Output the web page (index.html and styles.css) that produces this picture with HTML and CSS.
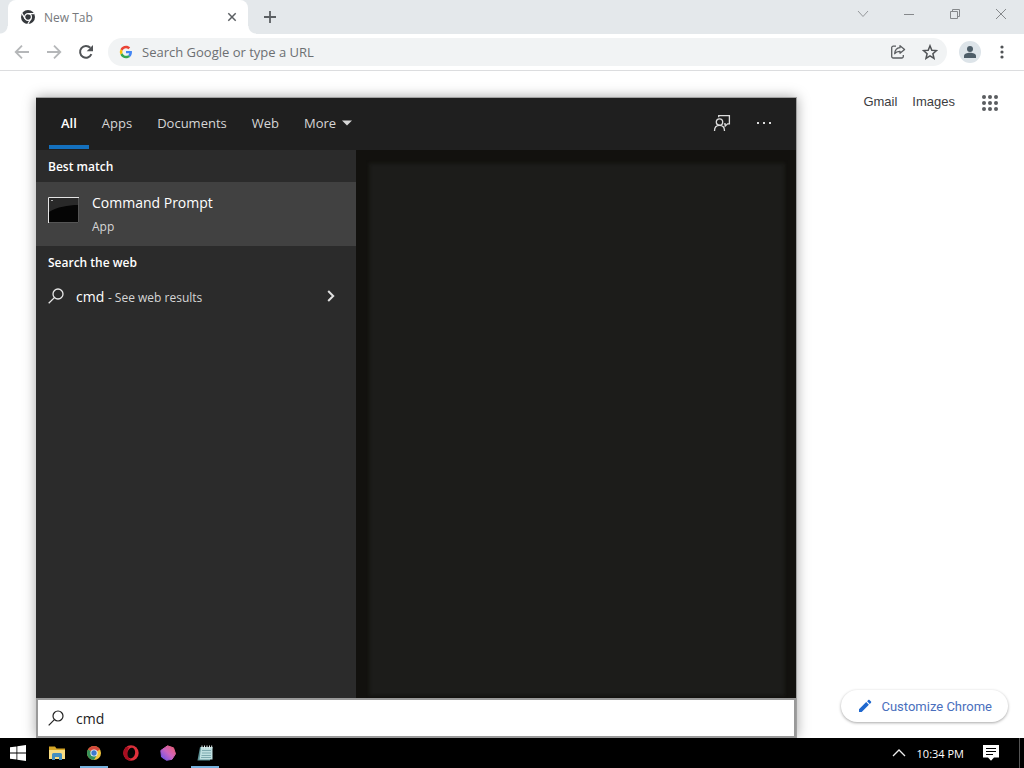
FILE: index.html
```html
<!DOCTYPE html>
<html lang="en">
<head>
    <meta charset="UTF-8">
    <meta name="viewport" content="width=device-width, initial-scale=1.0">
    <title>New Tab</title>
    <link rel="stylesheet" href="styles.css">
</head>
<body>
    <!-- Browser window -->
    <main class="browser">
        <div class="tab-strip">
            <div class="tab">
                <svg class="tab-icon" width="16" height="16" viewBox="0 0 16 16">
                    <circle cx="8" cy="8" r="7" fill="#35383c"/>
                    <circle cx="8" cy="8" r="3.4" fill="none" stroke="#fff" stroke-width="1.2"/>
                    <path d="M8 4.6h6.2M5.1 9.7L2 4.4M10.9 9.7L7.8 15" stroke="#fff" stroke-width="1.2"/>
                </svg>
                <span class="tab-title">New Tab</span>
                <button class="icon-button tab-close" aria-label="Close tab">
                    <svg width="10" height="10" viewBox="0 0 10 10"><path d="M1.300 1.300l7.400 7.400M8.700 1.300L1.300 8.700" stroke="#5b5f63" stroke-width="1.500"/></svg>
                </button>
            </div>
            <button class="icon-button new-tab" aria-label="New tab">
                <svg width="14" height="14" viewBox="0 0 14 14"><path d="M7 1v12M1 7h12" stroke="#5b5f63" stroke-width="1.800"/></svg>
            </button>
            <div class="window-controls">
                <button class="icon-button" aria-label="Search tabs">
                    <svg width="12" height="12" viewBox="0 0 12 12"><path d="M1 3l5 5.500L11 3" fill="none" stroke="#95989b"/></svg>
                </button>
                <button class="icon-button" aria-label="Minimize">
                    <svg width="12" height="12" viewBox="0 0 12 12"><path d="M1 6.500h10" stroke="#85888b"/></svg>
                </button>
                <button class="icon-button" aria-label="Restore">
                    <svg width="12" height="12" viewBox="0 0 12 12"><path d="M1.500 3.500h7v7h-7zM3.500 3.500v-2h7v7h-2" fill="none" stroke="#85888b"/></svg>
                </button>
                <button class="icon-button" aria-label="Close">
                    <svg width="12" height="12" viewBox="0 0 12 12"><path d="M1 1l10 10M11 1L1 11" stroke="#85888b"/></svg>
                </button>
            </div>
        </div>

        <div class="toolbar">
            <button class="icon-button nav-button" aria-label="Back">
                <svg width="16" height="16" viewBox="0 0 16 16"><path d="M15 8H2M8 1.700L1.700 8 8 14.300" fill="none" stroke="#b5b7b9" stroke-width="1.800"/></svg>
            </button>
            <button class="icon-button nav-button" aria-label="Forward">
                <svg width="16" height="16" viewBox="0 0 16 16"><path d="M1 8h13M8 1.700L14.300 8 8 14.300" fill="none" stroke="#b5b7b9" stroke-width="1.800"/></svg>
            </button>
            <button class="icon-button nav-button" aria-label="Reload">
                <svg width="16" height="16" viewBox="0 0 16 16"><path d="M13.400 10.200A5.900 5.900 0 1 1 12.300 3.800" fill="none" stroke="#505356" stroke-width="2"/><path d="M15 1v6.300H8.700z" fill="#505356"/></svg>
            </button>
            <div class="omnibox">
                <svg width="14" height="14" viewBox="-3 -3 54 54">
                    <path fill="#ea4335" d="M24 9.500c3.540 0 6.710 1.220 9.210 3.600l6.850-6.850C35.900 2.380 30.470 0 24 0 14.620 0 6.510 5.380 2.560 13.220l7.980 6.190C12.430 13.720 17.740 9.500 24 9.500z"/>
                    <path fill="#4285f4" d="M46.980 24.550c0-1.570-.15-3.090-.38-4.550H24v9.020h12.940c-.58 2.960-2.260 5.480-4.780 7.180l7.730 6c4.510-4.180 7.090-10.360 7.090-17.650z"/>
                    <path fill="#fbbc05" d="M10.530 28.590a14.500 14.500 0 0 1 0-9.180l-7.980-6.190a24 24 0 0 0 0 21.560z"/>
                    <path fill="#34a853" d="M24 48c6.480 0 11.930-2.130 15.890-5.810l-7.730-6c-2.150 1.450-4.920 2.300-8.160 2.300-6.260 0-11.570-4.220-13.470-9.910l-7.980 6.190C6.510 42.620 14.620 48 24 48z"/>
                </svg>
                <input class="omnibox-input" type="text" aria-label="Address" placeholder="Search Google or type a URL">
                <button class="icon-button" aria-label="Share">
                    <svg width="16" height="16" viewBox="0 0 16 16" fill="none" stroke="#5a5d60" stroke-width="1.300"><path d="M6 2.200H3.200a1.500 1.500 0 0 0-1.500 1.500v8.800A1.500 1.500 0 0 0 3.200 14h8.600a1.500 1.500 0 0 0 1.500-1.500V11"/><path d="M10 1.700l4.600 3.700L10 9.200V7.300c-2.300-.1-4 .5-5.300 2.400.2-3.400 2-5.700 5.300-6z" stroke-linejoin="round"/></svg>
                </button>
                <button class="icon-button" aria-label="Bookmark this tab">
                    <svg width="16" height="16" viewBox="0 0 16 16"><path d="M8 1.800l1.800 4.400 4.700.4-3.600 3.100 1.100 4.600L8 11.800l-4 2.500 1.100-4.600-3.600-3.100 4.700-.4z" fill="none" stroke="#505356" stroke-width="1.500"/></svg>
                </button>
            </div>
            <button class="icon-button avatar" aria-label="Profile">
                <svg width="14" height="14" viewBox="0 0 14 14" fill="#4d5d68"><circle cx="7" cy="4" r="3"/><path d="M1 13v-2c0-2 3-3.200 6-3.200s6 1.200 6 3.200v2z"/></svg>
            </button>
            <button class="icon-button menu-button" aria-label="Menu">
                <svg width="4" height="14" viewBox="0 0 4 14" fill="#505356"><circle cx="2" cy="2" r="1.600"/><circle cx="2" cy="7" r="1.600"/><circle cx="2" cy="12" r="1.600"/></svg>
            </button>
        </div>

        <div class="page">
            <nav class="page-links">
                <a href="#">Gmail</a>
                <a href="#">Images</a>
                <button class="icon-button" aria-label="Google apps">
                    <svg width="18" height="18" viewBox="0 0 18 18" fill="#5a5d60">
                        <circle cx="3" cy="3" r="2"/><circle cx="9" cy="3" r="2"/><circle cx="15" cy="3" r="2"/>
                        <circle cx="3" cy="9" r="2"/><circle cx="9" cy="9" r="2"/><circle cx="15" cy="9" r="2"/>
                        <circle cx="3" cy="15" r="2"/><circle cx="9" cy="15" r="2"/><circle cx="15" cy="15" r="2"/>
                    </svg>
                </button>
            </nav>
            <button class="customize">
                <svg width="16" height="16" viewBox="0 0 16 16" fill="#1f68cf"><path d="M2 11.300V14h2.700l7.200-7.200-2.700-2.700zM10.100 3.200l2.700 2.700 1.200-1.200c.4-.4.4-.9 0-1.200l-1.500-1.500c-.4-.4-.9-.4-1.200 0z"/></svg>
                Customize Chrome
            </button>
        </div>
    </main>

    <!-- Windows search flyout -->
    <section class="search-panel">
        <header class="search-header">
            <nav class="filters">
                <button class="filter active">All</button>
                <button class="filter">Apps</button>
                <button class="filter">Documents</button>
                <button class="filter">Web</button>
                <button class="filter">More
                    <svg width="10" height="6" viewBox="0 0 10 6"><path d="M0 .5h10L5 5.500z" fill="#d6d6d6"/></svg>
                </button>
            </nav>
            <button class="icon-button header-button" aria-label="Feedback">
                <svg width="18" height="18" viewBox="0 0 18 18" fill="none" stroke="#dcdcdc" stroke-width="1.300"><circle cx="6.500" cy="8" r="3.200"/><path d="M1.500 17c0-3.600 2-5.600 5-5.600s5 2 5 5.600M5.700 3.200V1.600h10.700v8.200h-1.800l-2.400 2.300V9.800h-1.300"/></svg>
            </button>
            <button class="icon-button header-button" aria-label="Options">
                <svg width="16" height="4" viewBox="0 0 16 4" fill="#dcdcdc"><path d="M1 1h2v2H1zM7 1h2v2H7zM13 1h2v2h-2z"/></svg>
            </button>
        </header>
        <div class="search-body">
            <div class="results">
                <h2>Best match</h2>
                <button class="best-match">
                    <svg width="32" height="26" viewBox="0 0 32 26">
                        <path d="M0 0h31v26H0z" fill="#050505"/>
                        <path d="M1 1h29v7C20 8 9 10 1 15z" fill="#292929"/>
                        <path d="M.5 26V.5H31" fill="none" stroke="#e4e4e4"/>
                        <path d="M30.500 1v24.500H1" fill="none" stroke="#555"/>
                        <path d="M3 3.500h2" stroke="#aaa"/>
                    </svg>
                    <span class="match-text">
                        <span class="match-name">Command Prompt</span>
                        <span class="match-type">App</span>
                    </span>
                </button>
                <h2>Search the web</h2>
                <button class="web-result">
                    <svg width="16" height="16" viewBox="0 0 16 16" fill="none" stroke="#e8e8e8" stroke-width="1.300"><circle cx="10" cy="6" r="5"/><path d="M6.400 9.600L.7 15.300"/></svg>
                    <span class="query">cmd <small>- See web results</small></span>
                    <svg width="8" height="12" viewBox="0 0 8 12"><path d="M1.200 1l5 5-5 5" fill="none" stroke="#e0e0e0" stroke-width="2"/></svg>
                </button>
            </div>
            <div class="preview"></div>
        </div>
        <label class="search-box">
            <svg width="16" height="16" viewBox="0 0 16 16" fill="none" stroke="#222" stroke-width="1.200"><circle cx="10" cy="6" r="5"/><path d="M6.400 9.600L.7 15.300"/></svg>
            <input type="text" aria-label="Search" value="cmd">
        </label>
    </section>

    <footer class="taskbar">
        <button class="icon-button start" aria-label="Start">
            <svg width="16" height="16" viewBox="0 0 16 16" fill="#fff"><path d="M0 2.300l6.500-.9v6.200H0zM7.300 1.300L16 0v7.600H7.300zM0 8.400h6.500v6.200L0 13.700zM7.300 8.400H16V16l-8.700-1.300z"/></svg>
        </button>
        <button class="icon-button task" aria-label="File Explorer">
            <svg width="16" height="16" viewBox="0 0 16 16"><path d="M0 1.500h6l1.500 2H16V14H0z" fill="#d9a928"/><path d="M0 5h16v9H0z" fill="#f9dd83"/><path d="M3 15V9.500a1.500 1.500 0 0 1 1.500-1.500h7A1.500 1.500 0 0 1 13 9.500V15h-3v-3H6v3z" fill="#458fc0"/></svg>
        </button>
        <button class="icon-button task running" aria-label="Chrome">
            <svg width="16" height="16" viewBox="0 0 16 16"><circle cx="8" cy="8" r="7" fill="#f4c63d"/><path d="M8 8L1.940 4.500A7 7 0 0 1 14.060 4.500z" fill="#d84b3e"/><path d="M8 8L1.940 4.500A7 7 0 0 0 8 15l3-5.300z" fill="#35915a"/><circle cx="8" cy="8" r="3.600" fill="#f2f4f5"/><circle cx="8" cy="8" r="2.700" fill="#3f79cc"/></svg>
        </button>
        <button class="icon-button task" aria-label="Opera">
            <svg width="16" height="16" viewBox="0 0 16 16"><circle cx="8" cy="8" r="7.700" fill="#e0313c"/><path d="M3 2.200a7.700 7.700 0 0 0 6 13.400C4.500 14 3.500 6 6 2z" fill="#a70e20"/><ellipse cx="8.300" cy="8" rx="3.800" ry="5.400" fill="#050505" transform="rotate(12 8 8)"/></svg>
        </button>
        <button class="icon-button task" aria-label="Paint">
            <svg width="16" height="16" viewBox="0 0 16 16"><defs><linearGradient id="gem" x1="0" y1="1" x2="1" y2="0"><stop offset="0" stop-color="#5b50ef"/><stop offset=".5" stop-color="#cd64c0"/><stop offset="1" stop-color="#f0616d"/></linearGradient></defs><path d="M7.500.8l6 2 2 6-3.500 5.500-5.500 1L1.500 12 .8 5.500z" fill="url(#gem)" stroke="url(#gem)" stroke-linejoin="round"/></svg>
        </button>
        <button class="icon-button task running" aria-label="Notepad">
            <svg width="16" height="16" viewBox="0 0 16 16"><path d="M3 2h12.500L13 15.500H.5z" fill="#5b8f93"/><path d="M4 2h11.500v12.500H2.500z" fill="#bfe0e1"/><path d="M5 5.500h9M5 8h9M4.500 10.500H14M4 12.500h10" stroke="#7eabb0"/><path d="M5 .5v3M7.500.5v3M10 .5v3M12.500.5v3M14.700.5v3" stroke="#e8f3f3"/></svg>
        </button>
        <div class="tray">
            <button class="icon-button" aria-label="Show hidden icons">
                <svg width="14" height="8" viewBox="0 0 14 8"><path d="M1 7l6-6 6 6" fill="none" stroke="#eee" stroke-width="1.300"/></svg>
            </button>
            <time class="clock" datetime="22:34">10:34 PM</time>
            <button class="icon-button notifications" aria-label="Notifications">
                <svg width="16" height="16" viewBox="0 0 16 16"><path d="M0 0h16v12.500h-5L8 15.800l-3-3.300H0z" fill="#fff"/><path d="M3 3.500h10M3 6.500h10M3 9.500h7" stroke="#000"/></svg>
            </button>
        </div>
    </footer>
</body>
</html>
```
FILE: styles.css
```css
* {
    box-sizing: border-box;
}
body {
    display: flex;
    flex-direction: column;
    height: 100vh;
    margin: 0;
    overflow: hidden;
    background: #fff;
    font-family: "Open Sans", "Noto Sans", sans-serif;
    font-size: 13px;
}
button, input {
    font: inherit;
    color: inherit;
}
button {
    border: 0;
    padding: 0;
    background: none;
    cursor: pointer;
}
svg {
    flex: none;
    display: block;
}
.icon-button {
    display: flex;
    align-items: center;
    justify-content: center;
}

/* Browser */
.browser {
    flex: 1;
    min-height: 0;
    display: flex;
    flex-direction: column;
}
.tab-strip {
    display: flex;
    height: 34px;
    padding-left: 8px;
    background: #e4e8eb;
}
.tab {
    position: relative;
    display: flex;
    align-items: center;
    width: 240px;
    padding: 0 8px 0 12px;
    gap: 8px;
    background: #fff;
    border-radius: 8px 8px 0 0;
    color: #76797c;
    font-size: 12px;
}
/* Curved feet of the active tab */
.tab::before, .tab::after {
    content: "";
    position: absolute;
    bottom: 0;
    width: 8px;
    height: 8px;
}
.tab::before {
    right: 100%;
    background: radial-gradient(circle at 0 0, transparent 7px, #fff 8px);
}
.tab::after {
    left: 100%;
    background: radial-gradient(circle at 100% 0, transparent 7px, #fff 8px);
}
.tab-title {
    flex: 1;
}
.tab-close {
    width: 16px;
    height: 16px;
}
.new-tab {
    width: 44px;
}
.window-controls {
    display: flex;
    margin-left: auto;
    height: 28px;
}
.window-controls button {
    width: 46px;
}
.toolbar {
    display: flex;
    align-items: center;
    height: 37px;
    padding: 0 6px;
    border-bottom: 1px solid #dcdddf;
}
.nav-button {
    width: 32px;
    height: 28px;
}
.omnibox {
    flex: 1;
    display: flex;
    align-items: center;
    gap: 16px;
    height: 28px;
    margin: 0 6px;
    padding: 0 9px 0 11px;
    border-radius: 14px;
    background: #f1f3f4;
}
.omnibox-input {
    flex: 1;
    min-width: 0;
    margin-left: -7px;
    padding: 0;
    border: 0;
    outline: 0;
    background: none;
}
.omnibox-input::placeholder {
    color: #6c6f72;
    opacity: 1;
}
.avatar {
    width: 22px;
    height: 22px;
    margin-left: 6px;
    border-radius: 50%;
    background: #dde4e9;
}
.menu-button {
    width: 32px;
    height: 28px;
    margin-left: 5px;
}
.page {
    flex: 1;
    display: flex;
    flex-direction: column;
    align-items: flex-end;
    justify-content: space-between;
    padding: 23px 16px 16px;
}
.page-links {
    display: flex;
    align-items: center;
    gap: 15px;
    padding-right: 9px;
    font-family: "Liberation Sans", Arial, sans-serif;
    line-height: 16px;
}
.page-links a {
    padding-bottom: 2px;
    color: #3c3d3f;
    text-decoration: none;
}
.page-links button {
    margin-left: 11px;
}
.customize {
    display: flex;
    align-items: center;
    gap: 8px;
    height: 32px;
    padding: 0 16px;
    border-radius: 16px;
    background: #fff;
    box-shadow: 0 1px 3px rgba(0, 0, 0, .35);
    color: #4a6fbd;
    font-family: Roboto, sans-serif;
}

/* Search flyout */
.search-panel {
    position: absolute;
    top: 97px;
    bottom: 30px;
    left: 36px;
    width: 761px;
    max-width: calc(100vw - 36px);
    display: flex;
    flex-direction: column;
    border: 1px solid #a0a0a0;
    border-width: 1px 1px 0 0;
    background: #1f1f1f;
    box-shadow: 0 0 12px rgba(0, 0, 0, .35);
    color: #d6d6d6;
}
.search-header {
    display: flex;
    height: 52px;
    padding: 0 11px 0 13px;
}
.filters {
    flex: 1;
    display: flex;
    gap: 1px;
}
.filter {
    display: flex;
    align-items: center;
    gap: 6px;
    padding: 2px 12px 0;
    border-bottom: 4px solid transparent;
    margin-bottom: 1px;
}
.filter.active {
    border-color: #1470bd;
    color: #fff;
    font-weight: 600;
}
.header-button {
    width: 42px;
    padding-bottom: 2px;
}
.search-body {
    flex: 1;
    min-height: 0;
    display: flex;
}
.results {
    flex: none;
    width: 320px;
    background: #2b2b2b;
}
.results h2 {
    margin: 0;
    padding: 2px 12px 0;
    color: #fff;
    font-size: 12px;
    font-weight: 600;
    line-height: 30px;
}
.best-match {
    display: flex;
    align-items: center;
    gap: 12px;
    width: 100%;
    height: 64px;
    padding: 0 12px;
    background: #414141;
    text-align: left;
}
.best-match svg {
    margin-bottom: 8px;
}
.match-text {
    display: flex;
    flex-direction: column;
    padding-top: 2px;
    line-height: 24px;
}
.match-name {
    color: #fff;
    font-size: 14px;
}
.match-type {
    font-size: 12px;
}
.web-result {
    display: flex;
    align-items: center;
    gap: 12px;
    width: 100%;
    height: 36px;
    padding: 0 21px 0 12px;
    text-align: left;
}
.query {
    flex: 1;
    color: #fff;
    font-size: 14px;
}
.query small {
    color: #d6d6d6;
    font-size: 12px;
}
.preview {
    flex: 1;
    background: #1c1c1a;
    border: solid #12110e;
    border-width: 10px 8px 0 10px;
    box-shadow: inset 0 2px 4px #12110e, inset 2px 0 4px #12110e, inset -2px 0 4px #12110e;
}
.search-box {
    display: flex;
    align-items: center;
    gap: 12px;
    height: 40px;
    padding: 0 10px;
    border: 2px solid #999;
    background: #fff;
    color: #222;
    font-size: 14px;
}
.search-box input {
    flex: 1;
    min-width: 0;
    padding: 0;
    border: 0;
    outline: 0;
    background: none;
}

/* Taskbar */
.taskbar {
    display: flex;
    height: 30px;
    background: #000;
    color: #fff;
}
.start {
    width: 36px;
    margin-right: 2px;
}
.task {
    width: 37px;
}
.running {
    background: linear-gradient(#76b1dd, #76b1dd) center bottom / 28px 2px no-repeat;
}
.tray {
    display: flex;
    align-items: center;
    gap: 11px;
    margin-left: auto;
    margin-right: 4px;
    border-right: 1px solid #555;
}
.clock {
    font-size: 11px;
}
.notifications {
    margin: 0 20px 0 8px;
}
```
